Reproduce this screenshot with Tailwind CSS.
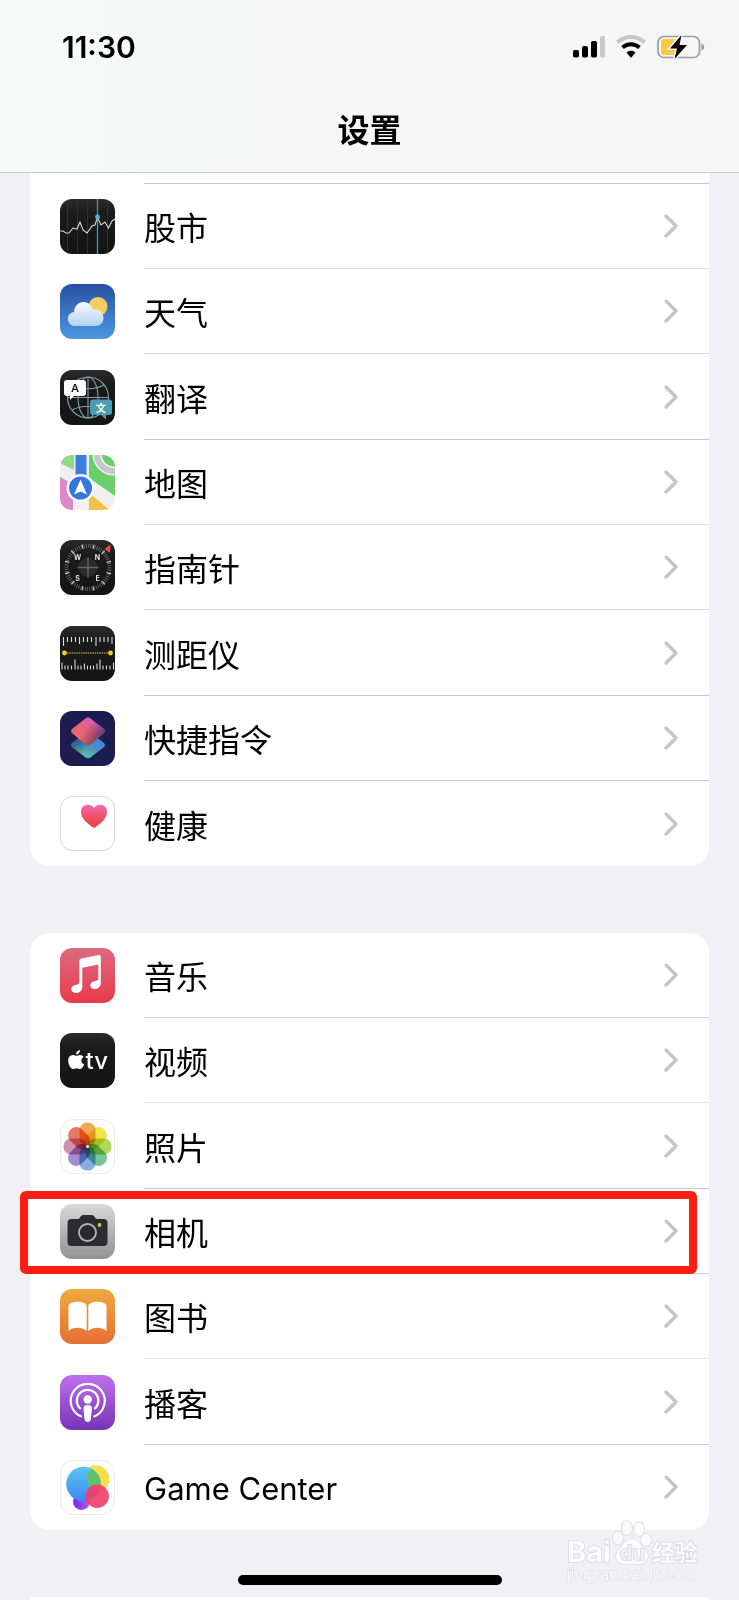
<!DOCTYPE html>
<html lang="zh-CN">
<head>
  <meta charset="UTF-8">
  <meta name="viewport" content="width=device-width, initial-scale=1.0">
  <title>设置</title>
  <script src="https://cdn.jsdelivr.net/npm/@tailwindcss/browser@4"></script>
</head>
<body class="relative flex min-h-screen flex-col bg-[#f1f0f5] font-['Inter','Noto_Sans_CJK_SC',sans-serif] text-black">

  <!-- shared gradients and symbols -->
  <svg class="absolute size-0" aria-hidden="true">
    <defs>
      <linearGradient id="g-dark" x2="0" y2="1"><stop stop-color="#2b2b2b"/><stop offset=".25" stop-color="#1b1b1b"/><stop offset="1" stop-color="#141414"/></linearGradient>
      <linearGradient id="g-sky" x2="0" y2="1"><stop stop-color="#2850a2"/><stop offset="1" stop-color="#4d97e2"/></linearGradient>
      <linearGradient id="g-cloud" x2="0" y2="1"><stop stop-color="#f8fafd"/><stop offset="1" stop-color="#b5d2f3"/></linearGradient>
      <linearGradient id="g-heart" x2="0" y2="1"><stop stop-color="#ee6bb0"/><stop offset="1" stop-color="#ee3b30"/></linearGradient>
      <linearGradient id="g-music" x2="0" y2="1"><stop stop-color="#dd6a80"/><stop offset="1" stop-color="#e93a49"/></linearGradient>
      <linearGradient id="g-camera" x2="0" y2="1"><stop stop-color="#d9d9db"/><stop offset="1" stop-color="#919196"/></linearGradient>
      <linearGradient id="g-books" x2="0" y2="1"><stop stop-color="#efaa3b"/><stop offset="1" stop-color="#e56f35"/></linearGradient>
      <linearGradient id="g-podcast" x2="0" y2="1"><stop stop-color="#c070ec"/><stop offset="1" stop-color="#7634b4"/></linearGradient>
      <linearGradient id="g-short-b" x1=".25" y1="1" x2=".75" y2=".1"><stop stop-color="#62cf98"/><stop offset=".5" stop-color="#4a92c0"/><stop offset="1" stop-color="#3a7cf2"/></linearGradient>
      <linearGradient id="g-short-t" x1=".2" y1=".9" x2=".7" y2="0"><stop stop-color="#f0704a"/><stop offset=".5" stop-color="#e5627c"/><stop offset="1" stop-color="#dc5ccc"/></linearGradient>
      <linearGradient id="g-fade-r" x1=".45" y1=".4" x2="1" y2=".75"><stop stop-color="#2c2560" stop-opacity="0"/><stop offset="1" stop-color="#2c2560" stop-opacity=".8"/></linearGradient>
      <linearGradient id="g-fade-l" x1=".5" y1=".6" x2="0" y2=".3"><stop stop-color="#1f3460" stop-opacity="0"/><stop offset="1" stop-color="#1f3460" stop-opacity=".8"/></linearGradient>
      <linearGradient id="g-blue" x2="0" y2="1"><stop stop-color="#58c8f4"/><stop offset="1" stop-color="#3f86f0"/></linearGradient>
      <linearGradient id="g-purple" x2="1" y2="0"><stop stop-color="#6a28f4"/><stop offset="1" stop-color="#c05ce8"/></linearGradient>
    </defs>
    <symbol id="chevron" viewBox="0 0 14 24"><path d="M2 2l10 10L2 22" fill="none" stroke="#c5c5c7" stroke-width="3.200" stroke-linecap="round" stroke-linejoin="round"/></symbol>
  </svg>

  <header class="border-b border-[#c9c9cb] bg-[#f6f6f6] bg-linear-to-r from-[#f6faf9] to-[#f6f6f6] to-40%">
    <div class="flex h-[94px] items-center justify-between pr-[34px] pl-[62px]">
      <time class="text-[30px] leading-8 font-semibold">11:30</time>
      <div class="flex items-center gap-[11px]">
        <svg class="h-[24px] w-[32px]" viewBox="0 0 32 24">
          <rect x="0" y="15" width="6" height="7.500" rx="1.800"/>
          <rect x="9" y="11" width="6" height="11.500" rx="1.800"/>
          <rect x="18" y="6" width="6" height="16.500" rx="1.800"/>
          <rect x="27" y="1" width="5.500" height="21.500" rx="1.800" fill="#c9c9c9"/>
        </svg>
        <svg class="h-[24px] w-[30px]" viewBox="0 0 30 24" fill="none">
          <path d="M1.500 7.500C9 0 21 0 28.500 7.500" stroke="#c6c6c6" stroke-width="4"/>
          <path d="M6.500 12.500c5-4.500 12-4.500 17 0" stroke="#000" stroke-width="4"/>
          <path d="M10.500 17.500c2.500-2.500 6.500-2.500 9 0L15 23z" fill="#000"/>
        </svg>
        <svg class="h-[24px] w-[48px]" viewBox="0 0 48 24">
          <rect x="1" y="1.500" width="41.500" height="21" rx="6" fill="none" stroke="#9b9b9b" stroke-width="1.700"/>
          <path d="M7 4h15v16H7a3 3 0 0 1-3-3V7a3 3 0 0 1 3-3z" fill="#f5cb45"/>
          <path d="M44.500 8.500c3.500 1 3.500 6 0 7z" fill="#9b9b9b"/>
          <path d="M24.500 0L13 13.500h7L17.500 24 30 10h-7.500z" fill="#000" stroke="#f6f6f6" stroke-width="3" paint-order="stroke"/>
        </svg>
      </div>
    </div>
    <h1 class="h-[78px] text-center text-[32px] leading-[74px] font-bold">设置</h1>
  </header>

  <main class="flex grow flex-col gap-[67px]">
    <!-- built-in apps -->
    <section class="mx-[30px] rounded-b-[20px] bg-white">
      <div class="ml-[114px] h-[11px] border-b border-[#c9c9cb]"></div>
      <ul>
        <li>
          <a href="#stocks" class="flex h-[85px] items-center gap-[29px] pl-[30px]">
            <svg class="size-[55px] shrink-0 rounded-[12px]" viewBox="0 0 55 55">
              <rect width="55" height="55" fill="url(#g-dark)"/>
              <path d="M7.500 0v55M17.500 0v55M27.500 0v55M47.500 0v55" stroke="#363636" stroke-width=".8"/>
              <path d="M0 32h3l3 2h3l4-5 4 1 3-7 3 8 4 3 5-7 3-1 2.500-8L41 26l4-3 3.500 6L52 22l3-2" fill="none" stroke="#d6d6d6" stroke-width="1.100"/>
              <path d="M37.500 0v55" stroke="#3f9fba" stroke-width="1.300"/><circle cx="37.500" cy="18" r="2.400" fill="#4cb8d6"/>
            </svg>
            <span class="flex h-full grow items-center justify-between border-b border-[#d8d8da] pt-1.5 pr-[31px] text-[32px]">股市<svg class="-mt-1.5 h-6 w-[14px]"><use href="#chevron"/></svg></span>
          </a>
        </li>
        <li>
          <a href="#weather" class="flex h-[85px] items-center gap-[29px] pl-[30px]">
            <svg class="size-[55px] shrink-0 rounded-[12px]" viewBox="0 0 55 55">
              <rect width="55" height="55" fill="url(#g-sky)"/>
              <circle cx="38" cy="22.500" r="9.500" fill="#f3cd62"/>
              <path d="M15.500 42a7 7 0 0 1-1.500-14c0-6 4.500-10 9.500-10 4.500 0 8 3 9 7.500 6-1.500 11 2.500 11 8.500 0 5-3.500 8-8 8z" fill="url(#g-cloud)"/>
            </svg>
            <span class="flex h-full grow items-center justify-between border-b border-[#d8d8da] pt-1.5 pr-[31px] text-[32px]">天气<svg class="-mt-1.5 h-6 w-[14px]"><use href="#chevron"/></svg></span>
          </a>
        </li>
        <li>
          <a href="#translate" class="flex h-[86px] items-center gap-[29px] pl-[30px]">
            <svg class="size-[55px] shrink-0 rounded-[12px]" viewBox="0 0 55 55">
              <rect width="55" height="55" fill="url(#g-dark)"/>
              <g fill="none" stroke="#7f9fa8" stroke-width="1.100">
                <circle cx="28" cy="27.500" r="20.500"/><ellipse cx="28" cy="27.500" rx="10" ry="20.500"/>
                <path d="M28 7v41M7.500 27.500h41M12 15c9 5 23 5 32 0M12 40c9-5 23-5 32 0"/>
              </g>
              <path d="M7 10h16a3 3 0 0 1 3 3v10a3 3 0 0 1-3 3h-9l-4 4v-4H7a3 3 0 0 1-3-3V13a3 3 0 0 1 3-3z" fill="#fff"/>
              <path d="M33 29.500h16a3 3 0 0 1 3 3V42a3 3 0 0 1-3 3h-3v4.500L41 45h-8a3 3 0 0 1-3-3v-9.500a3 3 0 0 1 3-3z" fill="#4c9db2"/>
              <text x="15" y="22" text-anchor="middle" font-size="11" font-weight="600" fill="#222">A</text>
              <text x="41" y="41.500" text-anchor="middle" font-size="10" font-weight="700" fill="#fff">文</text>
            </svg>
            <span class="flex h-full grow items-center justify-between border-b border-[#c9c9cb] pt-1.5 pr-[31px] text-[32px]">翻译<svg class="-mt-1.5 h-6 w-[14px]"><use href="#chevron"/></svg></span>
          </a>
        </li>
        <li>
          <a href="#maps" class="flex h-[85px] items-center gap-[29px] pl-[30px]">
            <svg class="size-[55px] shrink-0 rounded-[12px]" viewBox="0 0 55 55">
              <rect width="55" height="55" fill="#f0f0f2"/>
              <path d="M0 0h14v15L0 8z" fill="#8edb84"/>
              <path d="M0 22l13 7v26H0z" fill="#d989c6"/>
              <path d="M29 0h26v41L29 23z" fill="#6bcf6a"/>
              <path d="M29 38l21 17H29z" fill="#f2c244"/>
              <circle cx="54" cy="-1" r="17" fill="none" stroke="#eef3ee" stroke-width="9"/>
              <circle cx="54" cy="-1" r="17" fill="none" stroke="#c8c4cb" stroke-width="6"/>
              <path d="M15.500 0h11v24h-11z" fill="#3d7ce0"/>
              <circle cx="20.500" cy="33" r="14" fill="#fff"/><circle cx="20.500" cy="33" r="11.500" fill="#3478de"/>
              <path d="M20.500 24.500L27 39.500l-6.500-3-6.500 3z" fill="#fff"/>
            </svg>
            <span class="flex h-full grow items-center justify-between border-b border-[#d8d8da] pt-1.5 pr-[31px] text-[32px]">地图<svg class="-mt-1.5 h-6 w-[14px]"><use href="#chevron"/></svg></span>
          </a>
        </li>
        <li>
          <a href="#compass" class="flex h-[85px] items-center gap-[29px] pl-[30px]">
            <svg class="size-[55px] shrink-0 rounded-[12px]" viewBox="0 0 55 55">
              <rect width="55" height="55" fill="url(#g-dark)"/>
              <circle cx="28" cy="27.500" r="21.500" fill="none" stroke="#6e6e6e" stroke-width="4" pathLength="60" stroke-dasharray=".35 .65"/>
              <circle cx="28" cy="27.500" r="21.500" fill="none" stroke="#eee" stroke-width="4.500" pathLength="12" stroke-dasharray=".08 .92" transform="rotate(14 28 27.500)"/>
              <circle cx="28" cy="27.500" r="9.500" fill="#2b2b2b"/>
              <path d="M28 17v21M17.500 27.500h21" stroke="#666" stroke-width="1.300"/>
              <path d="M50.500 4.500l-.5 8.500-5.500-4z" fill="#ee4e3a"/>
              <g font-size="7" font-weight="600" fill="#f2f2f2" text-anchor="middle"><text x="17.500" y="20">W</text><text x="37.500" y="20">N</text><text x="17.500" y="41">S</text><text x="37.500" y="41">E</text></g>
            </svg>
            <span class="flex h-full grow items-center justify-between border-b border-[#d8d8da] pt-1.5 pr-[31px] text-[32px]">指南针<svg class="-mt-1.5 h-6 w-[14px]"><use href="#chevron"/></svg></span>
          </a>
        </li>
        <li>
          <a href="#measure" class="flex h-[86px] items-center gap-[29px] pl-[30px]">
            <svg class="size-[55px] shrink-0 rounded-[12px]" viewBox="0 0 55 55">
              <rect width="55" height="55" fill="url(#g-dark)"/>
              <g stroke="#d9d9d9" stroke-width="1.100">
                <path d="M3.500 11v9M7.500 11v5M11.500 11v5M15.500 11v5M19.500 11v7M23.500 11v5M27.500 11v5M31.500 11v5M36 11v9M40 11v5M44 11v5M48 11v5M52 11v7"/>
                <path d="M2 43.500v-7M5 43.500v-4M8 43.500v-4M11.500 43.500v-4M15 43.500v-10M18 43.500v-4M21 43.500v-4M24.500 43.500v-6M27.500 43.500v-4M30.500 43.500v-4M33.500 43.500v-4M37 43.500v-6M40 43.500v-10M43 43.500v-4M46.500 43.500v-4M50 43.500v-4M53.500 43.500v-7"/>
              </g>
              <path d="M7 27h42" stroke="#e5c13c" stroke-width="1.200" stroke-dasharray="1.500 .8"/>
              <circle cx="4.500" cy="27" r="2.400" fill="#f4cc3c"/><circle cx="50.500" cy="27" r="2.400" fill="#f4cc3c"/>
            </svg>
            <span class="flex h-full grow items-center justify-between border-b border-[#c9c9cb] pt-1.5 pr-[31px] text-[32px]">测距仪<svg class="-mt-1.5 h-6 w-[14px]"><use href="#chevron"/></svg></span>
          </a>
        </li>
        <li>
          <a href="#shortcuts" class="flex h-[85px] items-center gap-[29px] pl-[30px]">
            <svg class="size-[55px] shrink-0 rounded-[12px]" viewBox="0 0 55 55">
              <rect width="55" height="55" fill="#1d1c50"/>
              <path id="tile" d="M25.500 21.500q2.500-2 5 0L44 32q2 2 0 4L30.500 46.500q-2.500 1.500-5 0L12 36q-2-2 0-4z" fill="url(#g-short-b)"/>
              <path d="M25.500 21.500q2.500-2 5 0L44 32q2 2 0 4L30.500 46.500q-2.500 1.500-5 0L12 36q-2-2 0-4z" fill="url(#g-fade-l)"/>
              <path d="M25.500 7.500q2.500-2 5 0L44 18q2 2 0 4L30.500 33.500q-2.500 1.500-5 0L12 22q-2-2 0-4z" fill="url(#g-short-t)"/>
              <path d="M25.500 7.500q2.500-2 5 0L44 18q2 2 0 4L30.500 33.500q-2.500 1.500-5 0L12 22q-2-2 0-4z" fill="url(#g-fade-r)"/>
            </svg>
            <span class="flex h-full grow items-center justify-between border-b border-[#c9c9cb] pt-1.5 pr-[31px] text-[32px]">快捷指令<svg class="-mt-1.5 h-6 w-[14px]"><use href="#chevron"/></svg></span>
          </a>
        </li>
        <li>
          <a href="#health" class="flex h-[85px] items-center gap-[29px] pl-[30px]">
            <svg class="size-[55px] shrink-0" viewBox="0 0 55 55">
              <rect x=".5" y=".5" width="54" height="54" rx="12" fill="#fff" stroke="#cecece" stroke-width=".8"/>
              <path d="M34 32C28 28 21 23 21 16c0-7.500 9-9.500 13-4 4-5.500 13-3.500 13 4 0 7-7 12-13 16z" fill="url(#g-heart)"/>
            </svg>
            <span class="flex h-full grow items-center justify-between pt-1.5 pr-[31px] text-[32px]">健康<svg class="-mt-1.5 h-6 w-[14px]"><use href="#chevron"/></svg></span>
          </a>
        </li>
      </ul>
    </section>

    <!-- media apps -->
    <section class="mx-[30px] rounded-[20px] bg-white">
      <ul>
        <li>
          <a href="#music" class="flex h-[85px] items-center gap-[29px] pl-[30px]">
            <svg class="size-[55px] shrink-0 rounded-[12px]" viewBox="0 0 55 55">
              <rect width="55" height="55" fill="url(#g-music)"/>
              <path d="M21.500 10.500L39 7q1.800-.3 1.800 1.500V35c0 3.500-2.500 6-6 6-5.500 0-6-6-1.500-7.500 3-1 5-.5 5-3V16.500l-16 3.200V39c0 3.500-2.500 6-6 6-6 0-6.500-6-2-7.800 3-1 5-.5 5-3.200V12.500q0-1.700 2.200-2z" fill="#fff"/>
            </svg>
            <span class="flex h-full grow items-center justify-between border-b border-[#d0d0d2] pt-1.5 pr-[31px] text-[32px]">音乐<svg class="-mt-1.5 h-6 w-[14px]"><use href="#chevron"/></svg></span>
          </a>
        </li>
        <li>
          <a href="#tv" class="flex h-[85px] items-center gap-[29px] pl-[30px]">
            <svg class="size-[55px] shrink-0 rounded-[12px]" viewBox="0 0 55 55">
              <rect width="55" height="55" fill="url(#g-dark)"/>
              <path d="M20 17c0 2.500-1.800 4.500-4 4.500 0-2.500 1.800-4.300 4-4.500zM16.500 22.800c1 0 2-.9 3.500-.9 1.500 0 2.800.8 3.600 2-3.200 2-2.800 6 .6 7.300-1 2.500-2.400 4.800-4.200 4.800-1.300 0-1.800-.8-3.400-.8s-2.200.8-3.400.8c-2.600 0-5-4.800-5-8.300 0-3.600 2.300-5.700 4.800-5.700 1.500 0 2.500.8 3.500.8z" fill="#fff"/>
              <text x="25.500" y="36" font-size="24" font-weight="500" fill="#fff">tv</text>
            </svg>
            <span class="flex h-full grow items-center justify-between border-b border-[#e4e4e6] pt-1.5 pr-[31px] text-[32px]">视频<svg class="-mt-1.5 h-6 w-[14px]"><use href="#chevron"/></svg></span>
          </a>
        </li>
        <li>
          <a href="#photos" class="flex h-[86px] items-center gap-[29px] pl-[30px]">
            <svg class="size-[55px] shrink-0" viewBox="0 0 55 55">
              <rect x=".5" y=".5" width="54" height="54" rx="12" fill="#fff" stroke="#e6e6e6" stroke-width=".8"/>
              <g class="*:mix-blend-multiply">
                <rect x="19.500" y="3.500" width="16" height="24" rx="7.500" fill="#f2a84c"/>
                <rect x="19.500" y="3.500" width="16" height="24" rx="7.500" fill="#f0e44e" transform="rotate(45 27.500 27.500)"/>
                <rect x="19.500" y="3.500" width="16" height="24" rx="7.500" fill="#b0d860" transform="rotate(90 27.500 27.500)"/>
                <rect x="19.500" y="3.500" width="16" height="24" rx="7.500" fill="#76c49a" transform="rotate(135 27.500 27.500)"/>
                <rect x="19.500" y="3.500" width="16" height="24" rx="7.500" fill="#80b0e0" transform="rotate(180 27.500 27.500)"/>
                <rect x="19.500" y="3.500" width="16" height="24" rx="7.500" fill="#a28eca" transform="rotate(225 27.500 27.500)"/>
                <rect x="19.500" y="3.500" width="16" height="24" rx="7.500" fill="#d092b2" transform="rotate(270 27.500 27.500)"/>
                <rect x="19.500" y="3.500" width="16" height="24" rx="7.500" fill="#ea7666" transform="rotate(315 27.500 27.500)"/>
              </g>
              <circle cx="27.500" cy="27.500" r="1.500" fill="#fff"/>
            </svg>
            <span class="flex h-full grow items-center justify-between border-b border-[#c9c9cb] pt-1.5 pr-[31px] text-[32px]">照片<svg class="-mt-1.5 h-6 w-[14px]"><use href="#chevron"/></svg></span>
          </a>
        </li>
        <li class="relative">
          <a href="#camera" class="flex h-[85px] items-center gap-[29px] pl-[30px]">
            <svg class="size-[55px] shrink-0 rounded-[12px]" viewBox="0 0 55 55">
              <rect width="55" height="55" fill="url(#g-camera)"/>
              <path d="M11.500 15H18c2 0 2.500-4 5-4h9c2.500 0 3 4 5 4h6.500a4 4 0 0 1 4 4v19a4 4 0 0 1-4 4h-32a4 4 0 0 1-4-4V19a4 4 0 0 1 4-4z" fill="#2c2c2e"/>
              <circle cx="27.500" cy="28.500" r="8.500" fill="#29292b" stroke="#b3b3b5" stroke-width="1.800"/>
              <circle cx="39.500" cy="21" r="1.900" fill="#d8c64a"/>
            </svg>
            <span class="flex h-full grow items-center justify-between border-b border-[#d0d0d2] pt-1.5 pr-[31px] text-[32px]">相机<svg class="-mt-1.5 h-6 w-[14px]"><use href="#chevron"/></svg></span>
          </a>
          <!-- highlight frame -->
          <div class="pointer-events-none absolute top-[2px] right-3 bottom-0 -left-[10px] rounded-[6px] border-8 border-[#fb1e12]"></div>
        </li>
        <li>
          <a href="#books" class="flex h-[85px] items-center gap-[29px] pl-[30px]">
            <svg class="size-[55px] shrink-0 rounded-[12px]" viewBox="0 0 55 55">
              <rect width="55" height="55" fill="url(#g-books)"/>
              <path d="M8.500 17c0-2.500 4-4.300 9-4.300s9.200 1.800 9.200 4.300v25c-5-4.200-13-4.200-18.200 0zM46.500 17c0-2.500-4-4.300-9-4.300s-9.200 1.800-9.200 4.300v25c5-4.200 13-4.200 18.200 0z" fill="#fff"/>
            </svg>
            <span class="flex h-full grow items-center justify-between border-b border-[#e0e0e2] pt-1.5 pr-[31px] text-[32px]">图书<svg class="-mt-1.5 h-6 w-[14px]"><use href="#chevron"/></svg></span>
          </a>
        </li>
        <li>
          <a href="#podcasts" class="flex h-[86px] items-center gap-[29px] pl-[30px]">
            <svg class="size-[55px] shrink-0 rounded-[12px]" viewBox="0 0 55 55">
              <rect width="55" height="55" fill="url(#g-podcast)"/>
              <g fill="none" stroke="#fff" stroke-width="2.200">
                <path d="M22 41.800a17 17 0 1 1 11.500 0"/><path d="M20.800 34a10.800 10.800 0 1 1 13.600 0"/>
              </g>
              <circle cx="27.700" cy="24.500" r="4.200" fill="#fff"/>
              <path d="M27.700 30c3 0 4.500 1.500 4.200 4l-1 10c-.3 4-6.100 4-6.400 0l-1-10c-.3-2.500 1.200-4 4.200-4z" fill="#fff"/>
            </svg>
            <span class="flex h-full grow items-center justify-between border-b border-[#d0d0d2] pt-1.5 pr-[31px] text-[32px]">播客<svg class="-mt-1.5 h-6 w-[14px]"><use href="#chevron"/></svg></span>
          </a>
        </li>
        <li>
          <a href="#game-center" class="flex h-[85px] items-center gap-[29px] pl-[30px]">
            <svg class="size-[55px] shrink-0" viewBox="0 0 55 55">
              <rect x=".5" y=".5" width="54" height="54" rx="12" fill="#fff" stroke="#eaeaea"/>
              <circle cx="21.500" cy="41.500" r="8.500" fill="url(#g-purple)"/>
              <circle cx="35.500" cy="19" r="13.800" fill="#f5e04a"/>
              <circle cx="23.500" cy="24" r="17.300" fill="url(#g-blue)"/>
              <path d="M31.500 8.700A17.300 17.300 0 0 1 38.500 32.500 13.800 13.800 0 0 1 31.500 8.700z" fill="#62c06c"/>
              <path d="M31.500 8.700A13.800 13.800 0 0 0 27 30l8 6 5-7z" fill="#62c06c" fill-opacity="0"/>
              <circle cx="37.200" cy="36.300" r="11.700" fill="#f23d68" fill-opacity=".9"/>
            </svg>
            <span class="flex h-full grow items-center justify-between pt-1 pr-[31px] text-[31px]">Game Center<svg class="-mt-1.5 h-6 w-[14px]"><use href="#chevron"/></svg></span>
          </a>
        </li>
      </ul>
    </section>

    <section class="mx-[30px] grow rounded-t-[20px] bg-white"></section>
  </main>

  <!-- home indicator -->
  <div class="absolute bottom-[15px] left-1/2 h-[10px] w-[264px] -translate-x-1/2 rounded-full bg-black"></div>

  <!-- watermark -->
  <svg class="absolute right-[38px] bottom-[12px] h-[70px] w-[136px]" viewBox="0 0 136 70" fill="#fbfbfd" stroke="#d9d9de" stroke-width="1.600" paint-order="stroke">
    <text x="2" y="44" font-size="29" font-weight="700">Bai</text>
    <ellipse cx="53" cy="20" rx="5" ry="6.500"/><ellipse cx="62" cy="10" rx="5" ry="7"/><ellipse cx="74" cy="11" rx="5" ry="7"/><ellipse cx="81" cy="22" rx="5" ry="6.500"/>
    <path d="M67 21c6 0 8 5 12 9 7 7 4 16-4 16-4 0-12 0-16 0-8 0-11-9-4-16 4-4 6-9 12-9z"/>
    <text x="55" y="42" font-size="20" font-weight="700" fill="#f1f0f5">du</text>
    <text x="87" y="43" font-size="23" font-weight="700">经验</text>
    <text x="2" y="62" font-size="15" stroke-width="1">jingyan.baidu.com</text>
  </svg>
</body>
</html>
